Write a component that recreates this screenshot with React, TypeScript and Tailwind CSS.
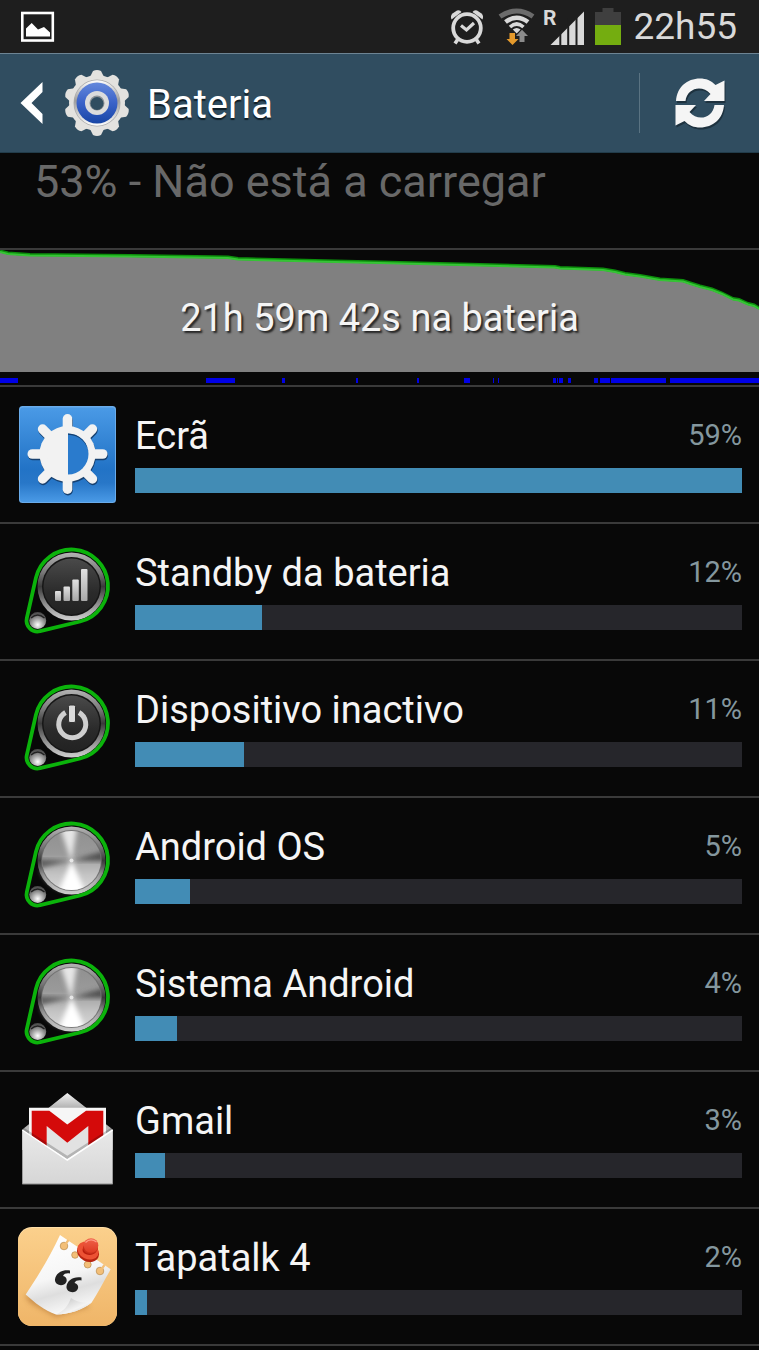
import type { ReactNode } from "react";

const SharedDefs = () => (
  <svg className="absolute w-0 h-0" aria-hidden="true">
    <defs>
      <linearGradient id="rim" x1="0" y1="0" x2="0" y2="1">
        <stop offset="0" stopColor="#b4b4b4" />
        <stop offset="0.3" stopColor="#777" />
        <stop offset="0.5" stopColor="#3a3a3a" />
        <stop offset="0.75" stopColor="#8c8c8c" />
        <stop offset="1" stopColor="#d0d0d0" />
      </linearGradient>
      <linearGradient id="face" x1="0" y1="0" x2="0" y2="1">
        <stop offset="0" stopColor="#4a4a4a" />
        <stop offset="0.6" stopColor="#2b2b2b" />
        <stop offset="1" stopColor="#222" />
      </linearGradient>
      <linearGradient id="steel" x1="0" y1="0" x2="0" y2="1">
        <stop offset="0" stopColor="#8e8e8e" />
        <stop offset="0.4" stopColor="#9a9a9a" />
        <stop offset="0.7" stopColor="#c4c4c4" />
        <stop offset="1" stopColor="#dedede" />
      </linearGradient>
      <linearGradient id="glyph" x1="0" y1="0" x2="0" y2="1">
        <stop offset="0" stopColor="#e2e2e2" />
        <stop offset="1" stopColor="#a8a8a8" />
      </linearGradient>
      <radialGradient id="ball" cx="0.5" cy="0.75" r="0.7">
        <stop offset="0" stopColor="#fff" />
        <stop offset="0.4" stopColor="#b5b5b5" />
        <stop offset="1" stopColor="#4a4a4a" />
      </radialGradient>
      <filter id="soft" x="-20%" y="-20%" width="140%" height="140%">
        <feGaussianBlur stdDeviation="2.5" />
      </filter>
      <clipPath id="disc">
        <circle cx="53.5" cy="44.5" r="29.5" />
      </clipPath>
    </defs>
  </svg>
);

const PulleyIcon = ({ children }: { children?: ReactNode }) => (
  <svg viewBox="0 0 99 99" className="w-full h-full" aria-hidden="true">
    <circle cx="53.5" cy="44.5" r="34" fill="url(#rim)" />
    {children ? (
      <>
        <circle cx="53.5" cy="44.5" r="29.5" fill="#161616" />
        <circle cx="53.5" cy="44.5" r="28" fill="url(#face)" />
        {children}
      </>
    ) : (
      <>
        <path d="M22 52A33 33 0 0 0 85 52L78 60 53 74 30 62Z" fill="#c9c9c9" filter="url(#soft)" />
        <circle cx="53.5" cy="44.5" r="30.500" fill="#6a6a6a" opacity="0.8" />
        <g clipPath="url(#disc)">
          <rect x="20" y="10" width="68" height="70" fill="url(#steel)" />
          <path d="M53.5 44.5 18 43V53Z" fill="#5c5c5c" filter="url(#soft)" />
          <path d="M53.5 44.5 90 34V45Z" fill="#505050" filter="url(#soft)" />
          <path d="M53.5 44.5 38 82H70Z" fill="#fff" filter="url(#soft)" />
          <path d="M53.5 46 40 6H60Z" fill="#e6e6e6" filter="url(#soft)" />
          <circle cx="53.5" cy="44.5" r="2" fill="#e6e6e6" />
        </g>
      </>
    )}
    <circle cx="19.700" cy="78.500" r="8.500" fill="url(#ball)" />
    <path d="M13 76Q19.700 70 26.500 76" fill="none" stroke="#222" strokeWidth="1.500" />
    <path
      d="M17.9 35.9A36.5 36.5 0 1 1 62.1 79.5L22.1 89.2A11 11 0 0 1 8.8 76.1Z"
      fill="none"
      stroke="#0bb30b"
      strokeWidth="3.800"
    />
  </svg>
);

const StandbyIcon = () => (
  <PulleyIcon>
    <g fill="url(#glyph)">
      <rect x="37" y="49" width="6" height="10" rx="1" />
      <rect x="45.5" y="44.5" width="6.500" height="14.500" rx="1" />
      <rect x="54.300" y="37.500" width="6.500" height="21.500" rx="1" />
      <rect x="63" y="27" width="6.500" height="32" rx="1" />
    </g>
  </PulleyIcon>
);

const IdleIcon = () => (
  <PulleyIcon>
    <path
      d="M47.500 33.500A13.500 13.500 0 1 0 61 33.500"
      fill="none"
      stroke="#cfcfcf"
      strokeWidth="5"
    />
    <rect x="50.500" y="26" width="7" height="17.500" rx="1.500" fill="#dadada" stroke="#333" strokeWidth="1" />
  </PulleyIcon>
);

const rayAngles = [0, 45, 90, 135, 180, 225, 270, 315];

const ScreenIcon = () => (
  <svg viewBox="0 0 99 99" className="w-full h-full" aria-hidden="true">
    <defs>
      <linearGradient id="sky" x1="0" y1="0" x2="0" y2="1">
        <stop offset="0" stopColor="#4a9ae6" />
        <stop offset="0.65" stopColor="#2273c6" />
        <stop offset="0.8" stopColor="#2877c8" />
        <stop offset="1" stopColor="#4a9ae6" />
      </linearGradient>
    </defs>
    <rect x="1" y="1" width="97" height="97" rx="3.500" fill="#69abea" />
    <rect x="2" y="2.500" width="95" height="94.500" rx="3" fill="url(#sky)" />
    {[true, false].map((shadow) => (
      <g
        key={String(shadow)}
        transform={shadow ? "translate(0.5 1.5)" : undefined}
        fill={shadow ? "#17406f" : "#f2f2f2"}
      >
        <circle cx="49.500" cy="49" r="28" />
        {rayAngles.map((angle) => (
          <rect
            key={angle}
            x="44.700"
            y="9"
            width="9.600"
            height="24"
            rx="4.800"
            transform={`rotate(${angle} 49.5 49)`}
          />
        ))}
      </g>
    ))}
    <path d="M50 28.500A20.500 20.500 0 0 1 50 69.500Z" fill="#2a7bcd" />
    <path d="M50 28.500A20.500 20.500 0 0 1 70.500 49A21 19.500 0 0 0 50 29.700Z" fill="#17406f" />
  </svg>
);

const GmailIcon = () => (
  <svg viewBox="0 0 99 99" className="w-full h-full" aria-hidden="true">
    <defs>
      <linearGradient id="flap" x1="0" y1="0" x2="0" y2="1">
        <stop offset="0" stopColor="#f2f2f2" />
        <stop offset="1" stopColor="#a9a9a9" />
      </linearGradient>
      <linearGradient id="front" x1="0" y1="0" x2="0" y2="1">
        <stop offset="0" stopColor="#e9e9e9" />
        <stop offset="1" stopColor="#d6d6d6" />
      </linearGradient>
    </defs>
    <path d="M49.300 3.500 4.300 39.500V60H94.700V39.500Z" fill="#b5b5b5" />
    <path d="M49.300 3 28 20H71Z" fill="url(#flap)" />
    <path d="M11 17.700H88V75H11Z" fill="#f6f6f6" />
    <path d="M28.700 36 49.300 52.700 70.300 36V70H28.700Z" fill="#e2e2e2" />
    <path
      d="M13.700 20.700H31.300L49.300 34.500 68 20.700H85.300V64H70.300V36L49.300 52.700 28.700 36V64H13.700Z"
      fill="#d40a0a"
    />
    <path d="M4.300 38.500 49.300 67.500 94.700 38.500" fill="none" stroke="#000" strokeWidth="3" opacity="0.2" />
    <path d="M4.300 40 49.300 70 94.700 40V94H4.300Z" fill="url(#front)" />
    <path d="M4.300 40 49.300 70 94.700 40" fill="none" stroke="#fff" strokeWidth="1.500" />
    <path d="M4.300 94H94.700" stroke="#8f8f8f" />
  </svg>
);

const QuoteMark = "M52 43.500C44 42 37.500 46.500 37 52.500 36.500 57 42 59.500 46 57.500 50 55 49.500 50 45 49 46 46.500 49 46 52 46.500Z";

const TapatalkIcon = () => (
  <svg viewBox="0 0 99 99" className="w-full h-full" aria-hidden="true">
    <defs>
      <linearGradient id="cork" x1="0" y1="0" x2="0" y2="1">
        <stop offset="0" stopColor="#fbd08c" />
        <stop offset="1" stopColor="#efb568" />
      </linearGradient>
      <linearGradient id="paper" x1="0.3" y1="0" x2="0.6" y2="1">
        <stop offset="0" stopColor="#fff" />
        <stop offset="0.5" stopColor="#f6f6f6" />
        <stop offset="0.7" stopColor="#dedede" />
        <stop offset="1" stopColor="#fff" />
      </linearGradient>
      <linearGradient id="curl" x1="0" y1="0" x2="1" y2="1">
        <stop offset="0" stopColor="#bdbdbd" />
        <stop offset="0.6" stopColor="#f4f4f4" />
        <stop offset="1" stopColor="#bbb" />
      </linearGradient>
      <linearGradient id="pin" x1="0" y1="0" x2="0" y2="1">
        <stop offset="0" stopColor="#f0634a" />
        <stop offset="1" stopColor="#dd3a22" />
      </linearGradient>
    </defs>
    <rect width="99" height="99" rx="14" fill="#ffdfa8" />
    <rect y="1" width="99" height="98" rx="14" fill="url(#cork)" />
    <path d="M6 68 12 76 38 90 72 80 60 70Z" fill="#a8692a" opacity="0.5" filter="url(#soft)" />
    <path d="M42 8 92.700 42.300C86 54 80 66 73.700 75.500 64 83 52 87 38 87.500 26 83 17 76 7.700 67.500 18 52 32 30 42 8Z" fill="url(#paper)" />
    <path d="M38 87.500C46 84 50 79 53 71 58 75 66 76.500 73.700 75.500 64 83 52 87 38 87.500Z" fill="url(#curl)" />
    <g fill="#f3bf78" stroke="#b98b4d" strokeWidth="0.700">
      <circle cx="46" cy="19" r="3.800" />
      <circle cx="57" cy="28" r="3.300" />
      <circle cx="69.700" cy="37.500" r="3.500" />
      <circle cx="82" cy="44" r="3.800" />
    </g>
    <path d="M47.500 17 50.500 13M83.500 42 86.500 38" stroke="#f3bf78" strokeWidth="2.200" />
    <ellipse cx="70" cy="25.500" rx="11.500" ry="9" transform="rotate(25 70 25.500)" fill="#b82410" />
    <ellipse cx="70" cy="23.500" rx="11" ry="8.500" transform="rotate(25 70 23.500)" fill="#ec5234" />
    <ellipse cx="71.500" cy="23" rx="7" ry="5" fill="#b81c0c" />
    <ellipse cx="72.500" cy="21" rx="7.500" ry="6" fill="#c9301a" />
    <circle cx="73" cy="18.500" r="7.300" fill="url(#pin)" />
    <path d="M67.500 15.500Q72.500 10.500 78.500 15" fill="none" stroke="#ff9c85" strokeWidth="1.200" />
    <g fill="#222">
      <path d={QuoteMark} />
      <path d={QuoteMark} transform="translate(11.5 7)" />
    </g>
  </svg>
);

const toothAngles = [0, 36, 72, 108, 144, 180, 216, 252, 288, 324];

const SettingsIcon = () => (
  <svg viewBox="0 0 68 68" className="w-[68px] h-[68px]" aria-hidden="true">
    <defs>
      <linearGradient id="gearBlue" x1="0" y1="0" x2="0" y2="1">
        <stop offset="0" stopColor="#6488dc" />
        <stop offset="0.5" stopColor="#3a62c8" />
        <stop offset="1" stopColor="#1846a6" />
      </linearGradient>
      <linearGradient id="gearRing" x1="0" y1="0" x2="0" y2="1">
        <stop offset="0" stopColor="#fff" />
        <stop offset="0.45" stopColor="#9c9c9c" />
        <stop offset="1" stopColor="#fff" />
      </linearGradient>
    </defs>
    <g fill="#e3e2df">
      <circle cx="34" cy="34" r="28" />
      {toothAngles.map((angle) => (
        <path
          key={angle}
          d="M27 8 30 2Q34 0 38 2L41 8Z"
          transform={`rotate(${angle} 34 34)`}
        />
      ))}
    </g>
    <circle cx="34" cy="34" r="23.500" fill="#aaa" />
    <circle cx="34" cy="34" r="22.800" fill="url(#gearRing)" />
    <circle cx="34" cy="34" r="20.500" fill="url(#gearBlue)" />
    <circle cx="34" cy="34" r="12" fill="#dcdcdc" />
    <circle cx="34" cy="34" r="7.500" fill="#8c9296" />
    <circle cx="34" cy="34.500" r="6.500" fill="#304d60" />
  </svg>
);

const RefreshArrow =
  "M2 24C3 10 13 1.500 26 1.500C32 1.500 37 3.500 41.500 8L50.500 3.500V24H30L36.500 17C28 7 13 11 11.500 24Z";

const RefreshIcon = () => (
  <svg viewBox="0 0 52 52" className="w-[52px] h-[52px] overflow-visible" aria-hidden="true">
    <g fill="#1a2c38" opacity="0.8" transform="translate(1 2)">
      <path d={RefreshArrow} />
      <path d={RefreshArrow} transform="rotate(180 26 26)" />
    </g>
    <g fill="#f5f5f5">
      <path d={RefreshArrow} />
      <path d={RefreshArrow} transform="rotate(180 26 26)" />
    </g>
  </svg>
);

const StatusBar = () => (
  <div className="flex items-center justify-between h-[53px] pl-5 pr-[22px] bg-[#1e1e1e]">
    <svg viewBox="0 0 35 32" className="w-[35px] h-8" aria-hidden="true">
      <rect x="2.300" y="2" width="30.500" height="27.500" fill="none" stroke="#fff" strokeWidth="2.600" />
      <path d="M6 25.500V17.500L11.700 12 18 18.500 24 16 30 21.500V25.500Z" fill="#fff" />
    </svg>
    <div className="flex items-center gap-2">
      <svg viewBox="0 0 40 38" className="w-10 h-[38px]" aria-hidden="true">
        <g fill="none" stroke="#d9d9d9">
          <circle cx="18" cy="20" r="13.800" strokeWidth="3.800" />
          <path d="M12 17.500 17.500 22 25 15" strokeWidth="3.200" />
          <path d="M9 31 6 35.500M27 31 30 35.500" strokeWidth="3.600" />
        </g>
        <path d="M2.500 11.500Q1 8 3.500 5.500L8 2.500Q11 1.500 12.500 4Z" fill="#d9d9d9" />
        <path d="M33.500 11.500Q35 8 32.500 5.500L28 2.500Q25 1.500 23.500 4Z" fill="#d9d9d9" />
      </svg>
      <svg viewBox="0 0 38 38" className="w-[38px] h-[38px]" aria-hidden="true">
        <path d="M3 8.500Q19.700-2.500 36 8.500" fill="none" stroke="#6b6b6b" strokeWidth="5" />
        <path d="M8.500 14Q19.700 5.500 31 14" fill="none" stroke="#d9d9d9" strokeWidth="4.600" />
        <path d="M13 19Q19.700 13 26.500 19" fill="none" stroke="#d9d9d9" strokeWidth="3.600" />
        <path d="M15.800 21.500Q19.700 18.500 23.600 21.500L19.700 25.500Z" fill="#d9d9d9" />
        <path d="M12.500 25H18V31H21.500L15.500 37 9.500 31H12.500Z" fill="#e59a2c" />
        <path d="M22.500 34V28H19L25 21.700 31 28H27.500V34Z" fill="#8c8c8c" />
      </svg>
      <svg viewBox="0 -5 44 48" className="w-11 h-12" aria-hidden="true">
        <text x="0" y="17" fontFamily="Roboto, sans-serif" fontSize="21" fontWeight="700" fill="#d9d9d9">
          R
        </text>
        <path d="M7.500 37 41 3.500V37Z" fill="#d9d9d9" />
        <path d="M17.300 10V38M25.200 10V38M33.500 8V38" stroke="#1e1e1e" strokeWidth="2" />
      </svg>
      <svg viewBox="0 0 30 38" className="w-[30px] h-[38px]" aria-hidden="true">
        <path d="M7.500 0H18.500V4H26V17H0V4H7.500Z" fill="#3f3f3f" />
        <path d="M0 17H26V37H0Z" fill="#74ad10" />
      </svg>
      <time className="text-[37px] leading-[52px] text-[#d9d9d9]">22h55</time>
    </div>
  </div>
);

const Header = () => (
  <header className="flex items-center justify-between h-[100px] border-y border-t-[#6d8493] border-b-[#223c4a] bg-[#304d60]">
    <div className="flex items-center">
      <button type="button" aria-label="Voltar" className="flex items-center pl-5">
        <svg viewBox="0 0 24 44" className="w-6 h-11" aria-hidden="true">
          <path d="M0.500 22 22.500 1V11L11.500 22 22.500 33V43Z" fill="#fff" />
        </svg>
      </button>
      <div className="pl-[19px]">
        <SettingsIcon />
      </div>
      <h1 className="pl-4 pt-1 text-[40px] leading-[48px] text-white text-shadow-[0_2px_1px_#0f1d26]">
        Bateria
      </h1>
    </div>
    <button
      type="button"
      aria-label="Actualizar"
      className="flex items-center justify-center w-[120px] h-[60px] border-l border-[#5a7382]"
    >
      <RefreshIcon />
    </button>
  </header>
);

const levelLine =
  "M0 1 8 3 30 4.500 130 5.500 228 7 238 8.500 335 11 380 12 555 16.500 560 17.500 603 19 615 21 625 23.500 640 25.500 660 29 683 30.500 692 33.500 700 36 712 39 722 43 733 48.500 739 49.500 748 53.500 754 55 759 58";

// start and end of every stretch in which the screen was on
const screenOn = [
  [0, 18],
  [206, 235],
  [282, 285],
  [356, 358],
  [417, 419],
  [464, 470],
  [493, 494],
  [498, 499],
  [553, 556],
  [557, 558],
  [559, 563],
  [568, 571],
  [594, 598],
  [600, 610],
  [611, 666],
  [670, 759],
];

const BatteryChart = () => (
  <section className="relative border-y-2 border-[#3a3a3a]">
    <svg viewBox="0 0 759 135" preserveAspectRatio="none" className="block w-full h-[135px]" aria-hidden="true">
      <path d={`${levelLine}V122H0Z`} fill="#808080" />
      <path d={levelLine} fill="none" stroke="#0c8f0c" strokeWidth="3" />
      <path d={levelLine} fill="none" stroke="#35c435" strokeWidth="2" transform="translate(0 1)" />
      {screenOn.map(([start, end]) => (
        <rect key={start} x={start} y="128" width={end - start} height="5" fill="#0000e6" />
      ))}
    </svg>
    <p className="absolute inset-x-0 top-11 text-center text-[38px] leading-[48px] text-[#f5f5f5] text-shadow-[2px_2px_2px_#222]">
      21h 59m 42s na bateria
    </p>
  </section>
);

const usage = [
  { name: "Ecrã", percent: 59, bar: 100, icon: <ScreenIcon /> },
  { name: "Standby da bateria", percent: 12, bar: 21, icon: <StandbyIcon /> },
  { name: "Dispositivo inactivo", percent: 11, bar: 18, icon: <IdleIcon /> },
  { name: "Android OS", percent: 5, bar: 9, icon: <PulleyIcon /> },
  { name: "Sistema Android", percent: 4, bar: 7, icon: <PulleyIcon /> },
  { name: "Gmail", percent: 3, bar: 5, icon: <GmailIcon /> },
  { name: "Tapatalk 4", percent: 2, bar: 2, icon: <TapatalkIcon /> },
];

const App = () => {
  return (
    <div className="min-h-screen bg-[#080808] font-[Roboto,sans-serif]">
      <SharedDefs />
      <StatusBar />
      <Header />
      <main>
        <p className="h-[95px] px-[34px] text-[45px] leading-[58px] text-[#686868] whitespace-nowrap overflow-hidden">
          53% - Não está a carregar
        </p>
        <BatteryChart />
        <ul>
          {usage.map((item) => (
            <li key={item.name} className="border-b-2 border-[#3a3a3a]">
              <button
                type="button"
                className="flex items-center w-full h-[135px] pl-[18px] pr-[17px] gap-[18px] text-left"
              >
                <span className="block shrink-0 w-[99px] h-[99px]">{item.icon}</span>
                <span className="block flex-1 min-w-0 pb-1">
                  <span className="flex items-start justify-between pb-2">
                    <span className="text-[38px] leading-[48px] text-[#f5f5f5]">{item.name}</span>
                    <span className="text-[29px] leading-[46px] text-[#84979e]">{item.percent}%</span>
                  </span>
                  <span className="block h-[25px] bg-[#26262b]">
                    <span className="block h-full bg-[#428cb5]" style={{ width: `${item.bar}%` }} />
                  </span>
                </span>
              </button>
            </li>
          ))}
        </ul>
      </main>
    </div>
  );
};

export default App;
